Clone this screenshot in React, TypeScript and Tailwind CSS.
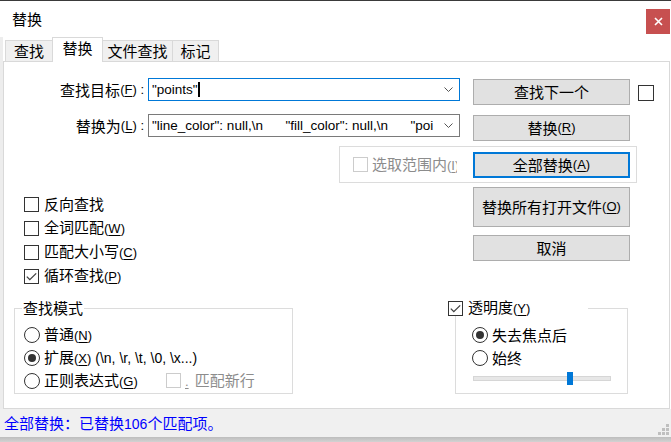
import React from 'react';

type P = { children?: React.ReactNode; className?: string };

const L = ({ children, className = '' }: P) => (
  <span className={`font-['Liberation_Sans'] text-[13px] ${className}`}>{children}</span>
);

const K = ({ k }: { k: string }) => (
  <L>
    (<span className="underline underline-offset-2">{k}</span>)
  </L>
);

const Check = ({ checked = false, disabled = false }: { checked?: boolean; disabled?: boolean }) => (
  <span
    className={`w-[15px] h-[15px] border bg-white flex items-center justify-center shrink-0 ${
      disabled ? 'border-[#cccccc]' : 'border-[#333333]'
    }`}
  >
    {checked && (
      <svg width="13" height="13" viewBox="0 0 13 13">
        <path d="M1.8 6.6 L4.8 9.6 L11.2 3.4" fill="none" stroke="#404040" strokeWidth="1.3" />
      </svg>
    )}
  </span>
);

const Radio = ({ checked = false }: { checked?: boolean }) => (
  <span className="w-[16px] h-[16px] rounded-full border border-[#333333] bg-white flex items-center justify-center shrink-0">
    {checked && <span className="w-[8px] h-[8px] rounded-full bg-[#333333]" />}
  </span>
);

const Btn = ({ children, className = '', focused = false }: P & { focused?: boolean }) => (
  <div
    className={`w-[157px] flex items-center justify-center bg-[#e1e1e1] shrink-0 ${
      focused ? 'border-2 border-[#0078d7]' : 'border border-[#adadad]'
    } ${className}`}
  >
    {children}
  </div>
);

const Chevron = () => (
  <svg width="9" height="5" viewBox="0 0 9 5" className="shrink-0 mr-[6px]">
    <path d="M0.5 0.5 L4.5 4.5 L8.5 0.5" fill="none" stroke="#555555" strokeWidth="1" />
  </svg>
);

export default function App() {
  return (
    <div className="w-[671px] h-[442px] bg-white flex flex-col overflow-hidden text-[15px] leading-[16px] text-black font-['Noto_Sans_CJK_SC',sans-serif]">
      <div className="h-px bg-[#3a3a3a]" />
      {/* title bar */}
      <div className="h-[36px] flex items-start">
        <span className="ml-[12px] mt-[10px]">替换</span>
        <div className="ml-auto mt-[8px] mr-[1px] w-[24px] h-[25px] bg-[#c75050] flex items-center justify-center">
          <svg width="9" height="9" viewBox="0 0 9 9">
            <path d="M1 1 L8 8 M8 1 L1 8" stroke="#ffffff" strokeWidth="1.6" />
          </svg>
        </div>
      </div>

      {/* body */}
      <div className="h-[372px] flex">
        <div className="w-[3px] bg-[#ededed]" />
        <div className="w-[667px] flex flex-col">
          {/* tabs */}
          <div className="h-[24px] flex items-end pl-[2px] relative z-10">
            <div className="w-[48px] h-[21px] border border-b-0 border-[#d9d9d9] bg-[#f0f0f0] flex items-center justify-center">
              查找
            </div>
            <div className="-ml-px w-[51px] h-[25px] -mb-px border border-b-0 border-[#d9d9d9] bg-white flex justify-center pt-[2px] relative z-10">
              替换
            </div>
            <div className="-ml-px w-[71px] h-[21px] border border-b-0 border-[#d9d9d9] bg-[#f0f0f0] flex items-center justify-center">
              文件查找
            </div>
            <div className="-ml-px w-[47px] h-[21px] border border-b-0 border-[#d9d9d9] bg-[#f0f0f0] flex items-center justify-center">
              标记
            </div>
          </div>

          {/* panel */}
          <div className="h-[348px] border border-[#d9d9d9] bg-white flex flex-col">
            {/* row 1 */}
            <div className="mt-[16px] flex items-start">
              <div className="w-[140px] h-[23px] flex items-center justify-end whitespace-nowrap">
                查找目标<K k="F" />
                <L>&nbsp;:</L>
              </div>
              <div className="ml-[4px] w-[312px] h-[23px] border border-[#0078d7] bg-white flex items-center pl-[3px]">
                <div className="w-[285px] flex items-center overflow-hidden whitespace-pre font-['Liberation_Sans'] text-[13.5px]">
                  "points"
                  <span className="inline-block w-[2px] h-[15px] bg-black" />
                </div>
                <div className="flex-1" />
                <Chevron />
              </div>
              <Btn className="ml-[13px] mt-[1px] h-[26px]">查找下一个</Btn>
              <div className="ml-[8px] mt-[7px]">
                <span className="w-[16px] h-[16px] border border-[#333333] bg-white block" />
              </div>
            </div>

            {/* row 2 */}
            <div className="mt-[9px] flex items-start">
              <div className="w-[140px] h-[23px] flex items-center justify-end whitespace-nowrap">
                替换为<K k="L" />
                <L>&nbsp;:</L>
              </div>
              <div className="ml-[4px] w-[312px] h-[23px] border border-[#7a7a7a] bg-white flex items-center pl-[3px]">
                <div className="w-[285px] overflow-hidden whitespace-pre font-['Liberation_Sans'] text-[13.5px]">
                  {'"line_color": null,\\n      "fill_color": null,\\n      "poi'}
                </div>
                <div className="flex-1" />
                <Chevron />
              </div>
              <Btn className="ml-[13px] mt-[1px] h-[26px]">
                替换<K k="R" />
              </Btn>
            </div>

            {/* in-selection group */}
            <div className="mt-[5px] ml-[335px] w-[298px] h-[37px] border border-[#dcdcdc] flex items-center pl-[13px]">
              <Check disabled />
              <span className="ml-[4px] w-[85px] overflow-hidden whitespace-nowrap text-[#8c8c8c]">
                选取范围内<L>(<span className="underline underline-offset-2">I</span>)</L>
              </span>
              <Btn focused className="ml-[16px] h-[26px]">
                全部替换<K k="A" />
              </Btn>
            </div>

            {/* bottom region */}
            <div className="flex">
              {/* left column */}
              <div className="ml-[10px] w-[279px] flex flex-col">
                <div className="mt-[9px] flex flex-col pl-[10px]">
                  <div className="h-[24px] flex items-center">
                    <Check />
                    <span className="ml-[5px]">反向查找</span>
                  </div>
                  <div className="h-[24px] flex items-center">
                    <Check />
                    <span className="ml-[5px]">
                      全词匹配<K k="W" />
                    </span>
                  </div>
                  <div className="h-[24px] flex items-center">
                    <Check />
                    <span className="ml-[5px]">
                      匹配大小写<K k="C" />
                    </span>
                  </div>
                  <div className="h-[24px] flex items-center">
                    <Check checked />
                    <span className="ml-[5px]">
                      循环查找<K k="P" />
                    </span>
                  </div>
                </div>

                <fieldset className="mt-[12px] border border-[#dcdcdc] pb-[1px]">
                  <legend className="ml-[7px] px-[1px] leading-[16px]">查找模式</legend>
                  <div className="pt-[7px] pl-[9px] flex flex-col">
                    <div className="h-[23px] flex items-center">
                      <Radio />
                      <span className="ml-[4px]">
                        普通<K k="N" />
                      </span>
                    </div>
                    <div className="h-[23px] flex items-center">
                      <Radio checked />
                      <span className="ml-[4px] whitespace-nowrap">
                        扩展<K k="X" />
                        <L className="text-[14px]">{' (\\n, \\r, \\t, \\0, \\x...)'}</L>
                      </span>
                    </div>
                    <div className="h-[23px] flex items-center">
                      <Radio />
                      <span className="ml-[4px] w-[122px] whitespace-nowrap">
                        正则表达式<K k="G" />
                      </span>
                      <Check disabled />
                      <span className="ml-[4px] text-[#8c8c8c] whitespace-nowrap">
                        <L>
                          <span className="underline underline-offset-2">.</span>
                        </L>
                        <span className="ml-[6px]">匹配新行</span>
                      </span>
                    </div>
                  </div>
                </fieldset>
              </div>

              {/* right column */}
              <div className="ml-[155px] w-[182px] flex flex-col">
                <Btn className="ml-[25px] mt-[4px] h-[40px]">
                  替换所有打开文件<K k="O" />
                </Btn>
                <Btn className="ml-[25px] mt-[8px] h-[26px]">取消</Btn>

                <fieldset className="mt-[39px] ml-[7px] w-[173px] border border-[#dcdcdc] pb-[1px]">
                  <legend className="-ml-[8px] w-[140px] leading-[16px]">
                    <span className="flex items-center h-[16px]">
                      <Check checked />
                      <span className="ml-[5px]">
                        透明度<K k="Y" />
                      </span>
                    </span>
                  </legend>
                  <div className="pt-[7px] pl-[16px] flex flex-col">
                    <div className="h-[23px] flex items-center">
                      <Radio checked />
                      <span className="ml-[4px]">失去焦点后</span>
                    </div>
                    <div className="h-[23px] flex items-center">
                      <Radio />
                      <span className="ml-[4px]">始终</span>
                    </div>
                    <div className="h-[23px] flex items-start pt-[7px] pl-[1px]">
                      <div className="w-[138px] h-[5px] bg-[#e7e7e7] border border-[#d6d6d6] relative">
                        <div className="absolute left-[93px] top-[-5px] w-[6px] h-[13px] bg-[#0078d7]" />
                      </div>
                    </div>
                  </div>
                </fieldset>
              </div>
            </div>
          </div>
        </div>
      </div>

      {/* status bar */}
      <div className="h-[28px] bg-[#f0f0f0] flex items-center justify-between pl-[4px] text-[#0000ff]">
        <span className="whitespace-nowrap">
          全部替换：已替换<L className="text-[14px]">106</L>个匹配项。
        </span>
        <svg width="12" height="12" viewBox="0 0 12 12" className="self-end mb-[1px] mr-[1px]">
          <rect x="8" y="0" width="3" height="3" fill="#bfbfbf" />
          <rect x="4" y="4" width="3" height="3" fill="#bfbfbf" />
          <rect x="8" y="4" width="3" height="3" fill="#bfbfbf" />
          <rect x="0" y="8" width="3" height="3" fill="#bfbfbf" />
          <rect x="4" y="8" width="3" height="3" fill="#bfbfbf" />
          <rect x="8" y="8" width="3" height="3" fill="#bfbfbf" />
        </svg>
      </div>
      <div className="h-[5px] bg-linear-to-b from-[#bdbdbd] to-[#d2d2d2]" />
    </div>
  );
}
